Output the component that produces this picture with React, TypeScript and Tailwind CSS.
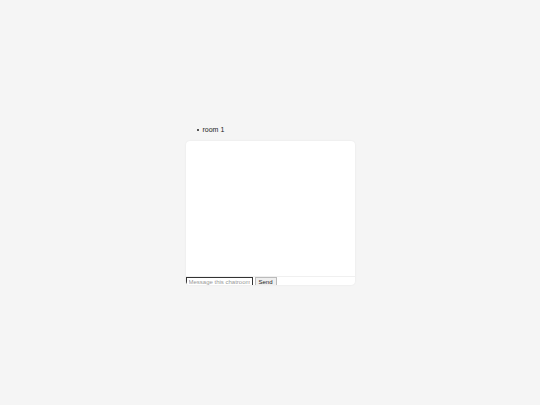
import React from 'react';

const App: React.FC = () => {
  return (
    <div className="min-h-screen bg-[#f5f5f5] flex justify-center font-['Liberation_Sans',Arial,sans-serif]">
      <div className="w-[169px] pt-[125px]">
        <ul className="pl-[11px] text-[7px] leading-[10px] text-[#222] font-normal">
          <li className="flex items-center gap-[4px]">
            <span className="w-[2px] h-[2px] rounded-full bg-[#222]" />
            <span>room 1</span>
          </li>
        </ul>
        <div className="mt-[6px] h-[144px] bg-white rounded-[4px] shadow-[0_0_2px_rgba(0,0,0,0.08)] flex flex-col overflow-hidden">
          <div className="flex-1" />
          <div className="border-t border-[#f0f0f0] flex items-start gap-[2px] h-[9px]">
            <input
              placeholder="Message this chatroom"
              className="w-[67px] h-[9px] border border-[#333] px-[2px] text-[6px] leading-none font-normal placeholder:text-[#999] bg-white outline-none"
            />
            <button className="h-[9px] px-[3px] border border-[#bbb] bg-[#efefef] text-[6px] leading-none font-normal text-[#222]">
              Send
            </button>
          </div>
        </div>
      </div>
    </div>
  );
};

export default App;
